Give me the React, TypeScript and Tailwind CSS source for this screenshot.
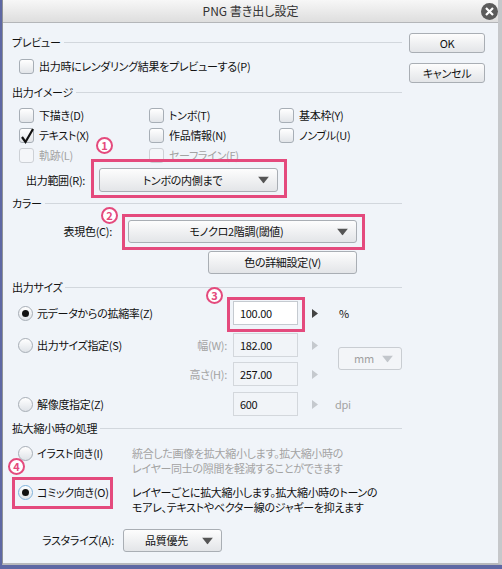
import React from 'react';

const PINK = 'border-[#e44a7d]';

const SectionHeader: React.FC<{ label: string }> = ({ label }) => (
  <div className="flex h-4 items-center">
    <span className="leading-none">{label}</span>
    <div className="ml-[3px] h-px flex-1 bg-[#d2d7dd]" />
  </div>
);

const CircleNum: React.FC<{ n: number; className: string }> = ({ n, className }) => (
  <span
    className={`absolute flex h-[17px] w-[17px] items-center justify-center rounded-full border-2 ${PINK} bg-white text-[11px] font-bold leading-none tracking-normal text-[#e44a7d] ${className}`}
  >
    {n}
  </span>
);

const Checkbox: React.FC<{ label: string; checked?: boolean; disabled?: boolean; className?: string }> = ({
  label,
  checked,
  disabled,
  className = '',
}) => (
  <div className={`flex h-5 items-center ${className}`}>
    <span
      className={`relative h-[15px] w-[15px] shrink-0 rounded-[3px] border ${
        disabled ? 'border-[#cdd1d6] bg-[#f4f6f9]' : 'border-[#a7aeb6] bg-linear-to-b from-white to-[#e2e5e9]'
      }`}
    >
      {checked && (
        <svg className="absolute -left-px -top-[3px]" width="17" height="19" viewBox="0 0 17 19">
          <path d="M3 11 L6.5 16 L14 3" fill="none" stroke="#111" strokeWidth="2.2" />
        </svg>
      )}
    </span>
    <span className={`ml-[5px] ${disabled ? 'text-[#a3a3a3]' : ''}`}>{label}</span>
  </div>
);

const Radio: React.FC<{ checked?: boolean; focus?: boolean }> = ({ checked, focus }) => (
  <span
    className={`flex h-[15px] w-[15px] shrink-0 items-center justify-center rounded-full border ${
      focus ? 'border-[#7fb2dc]' : 'border-[#a7aeb6]'
    } bg-linear-to-b from-white to-[#dfe3e8]`}
  >
    {checked && <span className="h-[7px] w-[7px] rounded-full bg-[#111]" />}
  </span>
);

const Arrow: React.FC<{ color: string }> = ({ color }) => (
  <svg width="11" height="7" viewBox="0 0 11 7">
    <path d="M0 0 H11 L5.5 7 Z" fill={color} />
  </svg>
);

const Dropdown: React.FC<{ text: string; className: string; disabled?: boolean }> = ({ text, className, disabled }) => (
  <div
    className={`relative flex items-center justify-center rounded-[3px] border ${
      disabled ? 'border-[#c9cdd2] bg-[#f3f5f8] text-[#a0a0a0]' : 'border-[#a9aeb4] bg-linear-to-b from-[#fdfdfd] to-[#e3e5e8]'
    } ${className}`}
  >
    <span className="pr-3">{text}</span>
    <span className="absolute right-[8px] top-1/2 -translate-y-1/2">
      <Arrow color={disabled ? '#c2c6cb' : '#555'} />
    </span>
  </div>
);

const Button: React.FC<{ text: string; className: string }> = ({ text, className }) => (
  <div
    className={`flex items-center justify-center rounded-[3px] border border-[#a9aeb4] bg-linear-to-b from-[#fdfdfd] to-[#e3e5e8] ${className}`}
  >
    {text}
  </div>
);

const Field: React.FC<{ value: string; enabled?: boolean }> = ({ value, enabled }) => (
  <div
    className={`flex h-6 w-[65px] items-center border pl-[6px] ${
      enabled ? 'border-[#c5cad0] bg-white' : 'border-[#d3d7dc] bg-[#f1f4f8]'
    }`}
  >
    {value}
  </div>
);

const RightTri: React.FC<{ enabled?: boolean }> = ({ enabled }) => (
  <svg width="6" height="9" viewBox="0 0 6 9" className="ml-[14px]">
    <path d="M0 0 L6 4.5 L0 9 Z" fill={enabled ? '#444' : '#c5c9ce'} />
  </svg>
);

export default function App() {
  return (
    <div className="h-[569px] w-[502px] overflow-hidden whitespace-nowrap bg-[#5e68a4] font-['Noto_Sans_CJK_JP',sans-serif] text-[11px] tracking-[-0.3px] text-[#111] [font-feature-settings:'palt']">
      <div className="ml-[2px] h-[565px] w-[500px] border-b-2 border-l border-r-4 border-b-[#b7b9bc] border-l-[#8f9296] border-r-[#c6c8cb] bg-[#f0f4f9]">
        {/* title bar */}
        <div className="relative flex h-[23px] items-center justify-center border-b border-[#b4b6b9] bg-linear-to-b from-[#f7f7f7] to-[#dedede] text-[12px] tracking-normal text-[#333]">
          PNG 書き出し設定
          <span className="absolute right-0 top-[3px] flex h-[17px] w-[17px] items-center justify-center rounded-full bg-[#5b5b5b]">
            <svg width="9" height="9" viewBox="0 0 9 9">
              <path d="M1 1 L8 8 M8 1 L1 8" stroke="#fff" strokeWidth="2.2" />
            </svg>
          </span>
        </div>

        <div className="flex">
          {/* main column */}
          <div className="ml-[9px] w-[390px]">
            <div className="mt-[11px]">
              <SectionHeader label="プレビュー" />
            </div>
            <div className="mt-[7px] pl-[7px]">
              <Checkbox label="出力時にレンダリング結果をプレビューする(P)" className="h-[18px]" />
            </div>

            <div className="mt-[9px]">
              <SectionHeader label="出力イメージ" />
            </div>
            <div className="mt-[5px] grid grid-cols-[130px_130px_130px] pl-[7px]">
              <Checkbox label="下描き(D)" />
              <Checkbox label="トンボ(T)" />
              <Checkbox label="基本枠(Y)" />
              <Checkbox label="テキスト(X)" checked />
              <Checkbox label="作品情報(N)" />
              <Checkbox label="ノンブル(U)" />
              <Checkbox label="軌跡(L)" disabled />
              <Checkbox label="セーフライン(F)" disabled />
            </div>
            <div className="mt-[3px] flex h-6 items-center pl-[14px]">
              <span className="w-[73px]">出力範囲(R):</span>
              <div className="relative">
                <Dropdown text="トンボの内側まで" className="h-6 w-[179px]" />
                <span className={`absolute -bottom-[6px] -left-[8px] -right-[9px] -top-[9px] border-[3px] ${PINK}`} />
                <CircleNum n={1} className="-left-[3px] -top-[31px]" />
              </div>
            </div>

            <div className="mt-[3px]">
              <SectionHeader label="カラー" />
            </div>
            <div className="mt-[9px] flex h-[23px] items-center">
              <span className="w-[100px] text-right">表現色(C):</span>
              <div className="relative ml-[16px]">
                <Dropdown text="モノクロ2階調(閾値)" className="h-[23px] w-[229px]" />
                <span className={`absolute -bottom-[7px] -left-[6px] -right-[8px] -top-[6px] border-[3px] ${PINK}`} />
                <CircleNum n={2} className="-left-[27px] -top-[13px]" />
              </div>
            </div>
            <div className="mt-[8px] pl-[196px]">
              <Button text="色の詳細設定(V)" className="h-[23px] w-[149px]" />
            </div>

            <div className="mt-[5px]">
              <SectionHeader label="出力サイズ" />
            </div>
            <div className="mt-[6px] flex h-6 items-center">
              <div className="flex w-[147px] items-center pl-[6px]">
                <Radio checked />
                <span className="ml-[4px]">元データからの拡縮率(Z)</span>
              </div>
              <span className="w-[68px]" />
              <div className="relative ml-[6px]">
                <Field value="100.00" enabled />
                <span className={`absolute -bottom-[7px] -left-[6px] -right-[7px] -top-[4px] border-[3px] ${PINK}`} />
                <CircleNum n={3} className="-left-[27px] -top-[14px]" />
              </div>
              <RightTri enabled />
              <span className="ml-[21px]">%</span>
            </div>
            <div className="flex items-center">
              <div>
                <div className="mt-[8px] flex h-6 items-center">
                  <div className="flex w-[147px] items-center pl-[6px]">
                    <Radio />
                    <span className="ml-[4px]">出力サイズ指定(S)</span>
                  </div>
                  <span className="w-[68px] text-right text-[#a3a3a3]">幅(W):</span>
                  <div className="ml-[6px]">
                    <Field value="182.00" />
                  </div>
                  <RightTri />
                </div>
                <div className="mt-[5px] flex h-6 items-center">
                  <span className="w-[147px]" />
                  <span className="w-[68px] text-right text-[#a3a3a3]">高さ(H):</span>
                  <div className="ml-[6px]">
                    <Field value="257.00" />
                  </div>
                  <RightTri />
                </div>
              </div>
              <div className="ml-[20px] mt-[6px]">
                <Dropdown text="mm" disabled className="h-[23px] w-[64px]" />
              </div>
            </div>
            <div className="mt-[6px] flex h-6 items-center">
              <div className="flex w-[147px] items-center pl-[6px]">
                <Radio />
                <span className="ml-[4px]">解像度指定(Z)</span>
              </div>
              <span className="w-[68px]" />
              <div className="ml-[6px]">
                <Field value="600" />
              </div>
              <RightTri />
              <span className="ml-[17px] text-[#a3a3a3]">dpi</span>
            </div>

            <div className="mt-[4px]">
              <SectionHeader label="拡大縮小時の処理" />
            </div>
            <div className="mt-[10px] flex items-start">
              <div className="flex h-[15px] w-[120px] items-center pl-[6px]">
                <Radio />
                <span className="ml-[4px]">イラスト向き(I)</span>
              </div>
              <div className="leading-[15px] text-[#a3a3a3]">
                統合した画像を拡大縮小します。拡大縮小時の
                <br />
                レイヤー同士の隙間を軽減することができます
              </div>
            </div>
            <div className="mt-[9px] flex items-start">
              <div className="w-[120px]">
                <div className="relative flex h-[15px] w-[101px] items-center pl-[6px]">
                  <Radio checked focus />
                  <span className="ml-[4px]">コミック向き(O)</span>
                  <span className={`absolute -bottom-[9px] left-0 right-0 -top-[8px] border-[3px] ${PINK}`} />
                  <CircleNum n={4} className="-left-[4px] -top-[27px]" />
                </div>
              </div>
              <div className="leading-[15px]">
                レイヤーごとに拡大縮小します。拡大縮小時のトーンの
                <br />
                モアレ、テキストやベクター線のジャギーを抑えます
              </div>
            </div>
            <div className="mt-[14px] flex h-[23px] items-center">
              <span className="w-[102px] text-right">ラスタライズ(A):</span>
              <div className="ml-[9px]">
                <Dropdown text="品質優先" className="h-[23px] w-[99px]" />
              </div>
            </div>
          </div>

          {/* buttons */}
          <div className="ml-[7px] flex flex-col gap-[10px] pt-[10px]">
            <Button text="OK" className="h-5 w-[76px]" />
            <Button text="キャンセル" className="h-5 w-[76px]" />
          </div>
        </div>
      </div>
    </div>
  );
}
